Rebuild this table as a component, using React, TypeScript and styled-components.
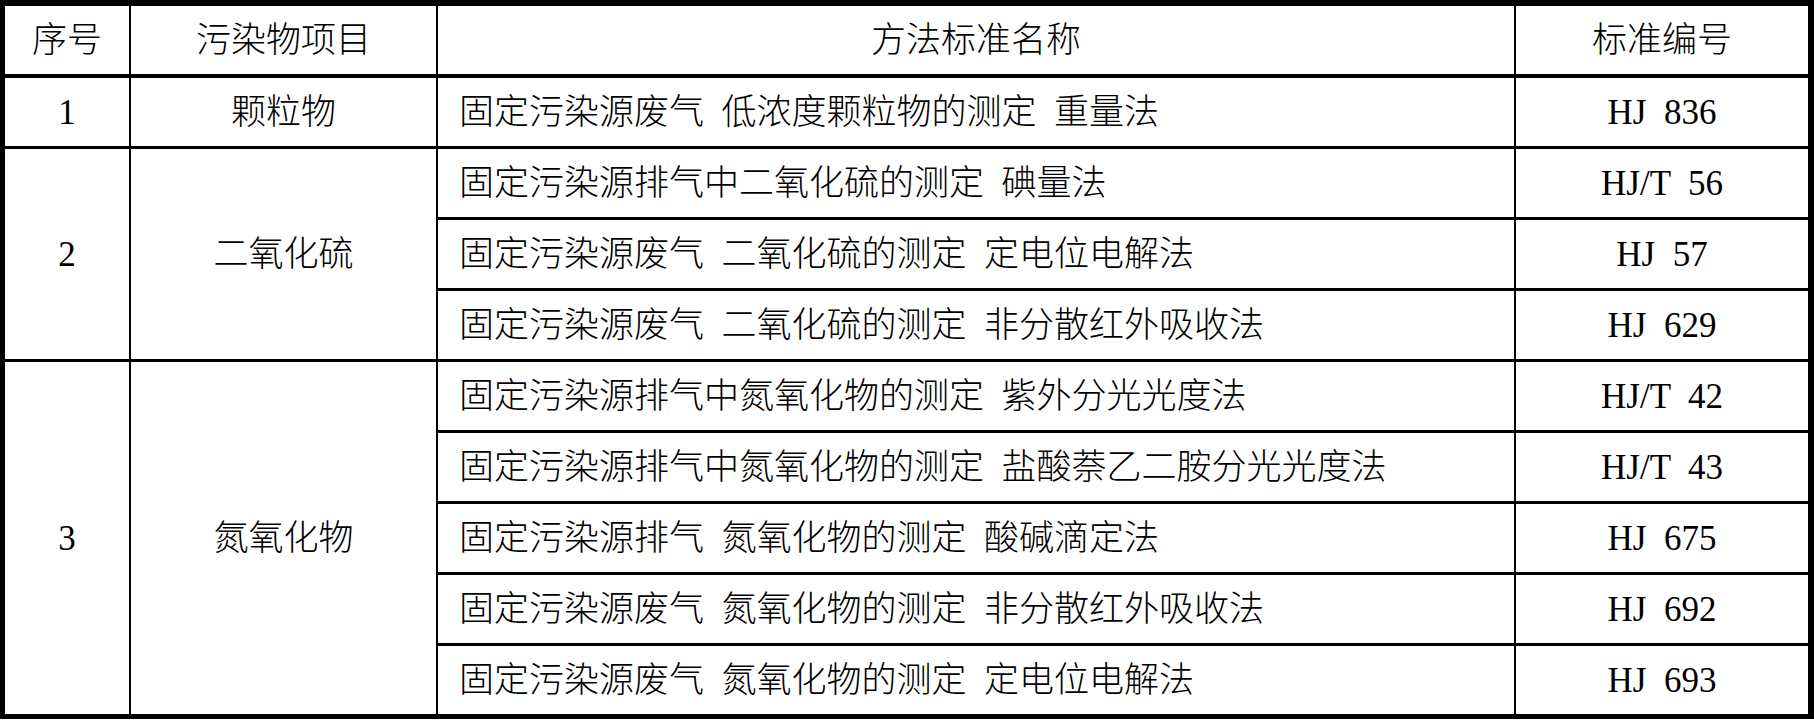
import React from "react";
import styled, { createGlobalStyle } from "styled-components";

const GlobalStyle = createGlobalStyle`
  html, body {
    margin: 0;
    padding: 0;
    background: #ffffff;
  }
  body {
    font-family: "Liberation Serif", "Noto Sans CJK SC", serif;
  }
`;

const Table = styled.table`
  border-collapse: separate;
  border-spacing: 0;
  border-style: solid;
  border-color: #000;
  border-width: 6px 6px 5px 5px;
  color: #000;
  font-family: "Liberation Serif", "Noto Sans CJK SC", serif;
  font-size: 35px;
  word-spacing: 8.75px;
`;

const Cell = styled.td<{ $right?: boolean; $bottom: number; $align?: "left" | "center" }>`
  padding: 0;
  vertical-align: middle;
  text-align: ${(p) => p.$align ?? "center"};
  border-right: ${(p) => (p.$right ? "2px solid #000" : "none")};
  border-bottom: ${(p) => (p.$bottom ? `${p.$bottom}px solid #000` : "none")};
  font-weight: 300;
`;

const Inner = styled.div<{ $w?: number; $pad?: number; $align?: "left" | "center" }>`
  height: 68px;
  ${(p) => (p.$w ? `width: ${p.$w}px;` : "")}
  box-sizing: border-box;
  padding-left: ${(p) => p.$pad ?? 0}px;
  display: flex;
  align-items: center;
  justify-content: ${(p) => (p.$align === "left" ? "flex-start" : "center")};
  white-space: nowrap;
  line-height: 1;
`;

const Span = styled.div`
  display: flex;
  align-items: center;
  justify-content: center;
  white-space: nowrap;
  line-height: 1;
`;

type Group = { no: string; item: string; methods: [string, string][] };

const groups: Group[] = [
  {
    no: "1",
    item: "颗粒物",
    methods: [["固定污染源废气 低浓度颗粒物的测定 重量法", "HJ 836"]],
  },
  {
    no: "2",
    item: "二氧化硫",
    methods: [
      ["固定污染源排气中二氧化硫的测定 碘量法", "HJ/T 56"],
      ["固定污染源废气 二氧化硫的测定 定电位电解法", "HJ 57"],
      ["固定污染源废气 二氧化硫的测定 非分散红外吸收法", "HJ 629"],
    ],
  },
  {
    no: "3",
    item: "氮氧化物",
    methods: [
      ["固定污染源排气中氮氧化物的测定 紫外分光光度法", "HJ/T 42"],
      ["固定污染源排气中氮氧化物的测定 盐酸萘乙二胺分光光度法", "HJ/T 43"],
      ["固定污染源排气 氮氧化物的测定 酸碱滴定法", "HJ 675"],
      ["固定污染源废气 氮氧化物的测定 非分散红外吸收法", "HJ 692"],
      ["固定污染源废气 氮氧化物的测定 定电位电解法", "HJ 693"],
    ],
  },
];

const widths = [124, 305, 1076, 292];
const headers = ["序号", "污染物项目", "方法标准名称", "标准编号"];

export default function App() {
  return (
    <>
      <GlobalStyle />
      <Table>
        <thead>
          <tr>
            {headers.map((h, i) => (
              <Cell as="th" key={h} $right={i < 3} $bottom={4}>
                <Inner $w={widths[i]}>{h}</Inner>
              </Cell>
            ))}
          </tr>
        </thead>
        <tbody>
          {groups.map((g, gi) => {
            const lastGroup = gi === groups.length - 1;
            return g.methods.map(([name, code], mi) => {
              const lastRow = lastGroup && mi === g.methods.length - 1;
              const b = lastRow ? 0 : 3;
              return (
                <tr key={code}>
                  {mi === 0 && (
                    <>
                      <Cell rowSpan={g.methods.length} $right $bottom={lastGroup ? 0 : 3}>
                        <Span>{g.no}</Span>
                      </Cell>
                      <Cell rowSpan={g.methods.length} $right $bottom={lastGroup ? 0 : 3}>
                        <Span>{g.item}</Span>
                      </Cell>
                    </>
                  )}
                  <Cell $right $bottom={b} $align="left">
                    <Inner $pad={21} $align="left">{name}</Inner>
                  </Cell>
                  <Cell $bottom={b}>
                    <Inner>{code}</Inner>
                  </Cell>
                </tr>
              );
            });
          })}
        </tbody>
      </Table>
    </>
  );
}
